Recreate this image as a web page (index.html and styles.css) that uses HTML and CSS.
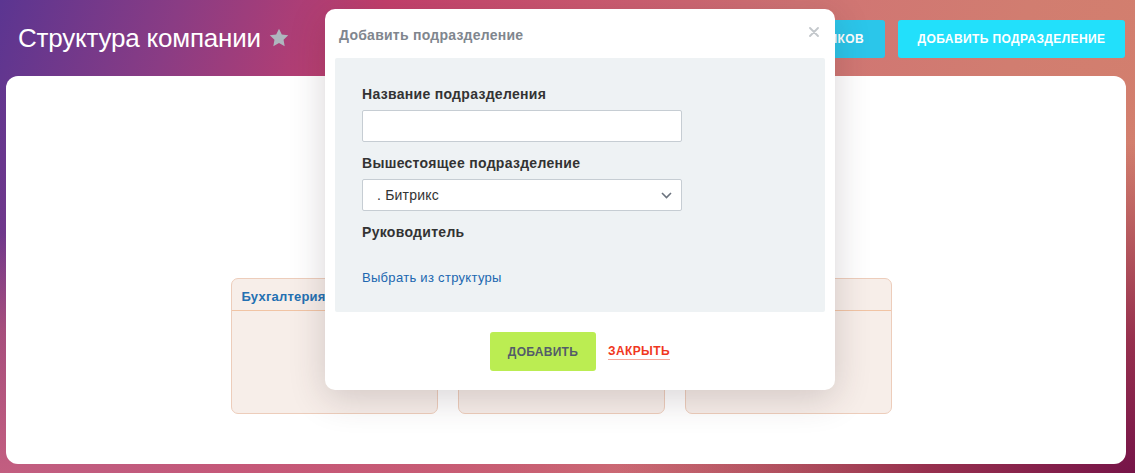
FILE: index.html
```html
<!DOCTYPE html>
<html lang="ru">
<head>
<meta charset="utf-8">
<title>Структура компании</title>
<link rel="stylesheet" href="styles.css">
</head>
<body>
<div class="page">
  <header class="top">
    <div class="title-wrap">
      <h1 class="title">Структура компании</h1>
      <svg class="star" width="20" height="19" viewBox="0 0 24 23"><path d="M12 0.8l3.4 7.1 7.8 1-5.7 5.4 1.4 7.7L12 18.3 5.1 22l1.4-7.7L0.8 8.9l7.8-1z" fill="#aeb6be"/></svg>
    </div>
    <div class="actions">
      <button class="btn btn-invite">Пригласить сотрудников</button>
      <button class="btn btn-add">Добавить подразделение</button>
    </div>
  </header>
  <main class="panel">
    <div class="cards">
      <div class="card"><div class="card-head">Бухгалтерия</div><div class="card-body"></div></div>
      <div class="card"><div class="card-head"></div><div class="card-body"></div></div>
      <div class="card"><div class="card-head"></div><div class="card-body"></div></div>
    </div>
  </main>
</div>

<div class="modal">
  <div class="modal-head">
    <span class="modal-title">Добавить подразделение</span>
    <svg class="modal-close" width="10" height="10" viewBox="0 0 10 10"><path d="M1 1L9 9M9 1L1 9" stroke="#c3c7cb" stroke-width="1.8" stroke-linecap="round"/></svg>
  </div>
  <div class="modal-body">
    <div class="field-label">Название подразделения</div>
    <div class="input"></div>
    <div class="field-label lbl-2">Вышестоящее подразделение</div>
    <div class="select">
      <span>. Битрикс</span>
      <svg width="11" height="7" viewBox="0 0 11 7"><path d="M1 1l4.5 4.5L10 1" fill="none" stroke="#6b737e" stroke-width="1.6"/></svg>
    </div>
    <div class="field-label lbl-3">Руководитель</div>
    <a class="link">Выбрать из структуры</a>
  </div>
  <div class="modal-foot">
    <button class="btn-ok">Добавить</button>
    <a class="btn-close">Закрыть</a>
  </div>
</div>
</body>
</html>
```

FILE: styles.css
```css
* { box-sizing: border-box; }
html, body { margin: 0; padding: 0; }
body {
  width: 1135px;
  height: 473px;
  overflow: hidden;
  position: relative;
  font-family: "Liberation Sans", Arial, sans-serif;
  background:
    radial-gradient(ellipse 520px 330px at 100% 100%, rgba(118, 20, 72, 1) 0%, rgba(140, 34, 72, 0.85) 40%, rgba(160, 50, 80, 0) 100%),
    radial-gradient(ellipse 850px 240px at 0% 100%, rgba(198, 96, 128, 0.95) 0%, rgba(196, 92, 116, 0.6) 60%, rgba(196, 92, 116, 0) 100%),
    linear-gradient(108deg, #5b3591 0%, #8a3c84 14%, #c43f6c 30%, #cc5870 45%, #d07474 62%, #d17d70 80%, #d4806c 100%);
}
.page { padding: 0 9px 9px 6px; }

.top {
  height: 76px;
  display: flex;
  align-items: center;
  justify-content: space-between;
}
.title-wrap { display: flex; align-items: center; padding-left: 12px; }
.title {
  margin: 0;
  font-size: 26px;
  font-weight: normal;
  color: #fff;
  letter-spacing: -0.2px;
}
.star { margin-left: 8px; margin-top: -2px; }

.actions { display: flex; gap: 13px; margin-right: 1px; margin-top: 2px; }
.btn {
  height: 38px;
  border: 0;
  border-radius: 3px;
  padding: 0 21px;
  color: #fff;
  font-family: "Liberation Sans", Arial, sans-serif;
  font-weight: bold;
  font-size: 12px;
  text-transform: uppercase;
  letter-spacing: 0.4px;
  white-space: nowrap;
}
.btn-invite { background: #2bc6ea; }
.btn-add { background: #22e0fb; width: 227px; padding: 0; }

.panel {
  height: 388px;
  background: #fff;
  border-radius: 12px;
  padding: 202px 0 0 0;
}
.cards {
  display: flex;
  justify-content: center;
  gap: 20px;
  margin-left: -10px;
}
.card {
  width: 207px;
  height: 136px;
  background: #f7eee9;
  border: 1px solid #edcdbb;
  border-radius: 7px;
}
.card-head {
  height: 32px;
  border-bottom: 1px solid #f1c4a4;
  padding: 10px 0 0 10px;
  font-size: 13px;
  font-weight: bold;
  color: #2470b2;
  letter-spacing: 0.2px;
}

.modal {
  position: absolute;
  left: 325px;
  top: 9px;
  width: 510px;
  height: 381px;
  background: #fff;
  border-radius: 10px;
  box-shadow: 0 8px 36px rgba(60, 40, 50, 0.2);
  display: flex;
  flex-direction: column;
}
.modal-head {
  height: 49px;
  display: flex;
  align-items: center;
  justify-content: space-between;
  padding: 2px 16px 0 14px;
}
.modal-title {
  font-size: 14px;
  font-weight: bold;
  color: #80868e;
  letter-spacing: 0.25px;
}
.modal-close { margin-top: -5px; }

.modal-body {
  margin: 0 10px;
  height: 254px;
  background: #eef2f4;
  border-radius: 2px;
  padding: 28px 0 0 27px;
  display: flex;
  flex-direction: column;
  align-items: flex-start;
}
.field-label {
  font-size: 14px;
  font-weight: bold;
  color: #333;
  line-height: 17px;
  letter-spacing: 0.3px;
}
.lbl-2 { margin-top: 13px; }
.lbl-3 { margin-top: 13px; }
.input, .select {
  width: 320px;
  height: 32px;
  margin-top: 7px;
  background: #fff;
  border: 1px solid #c6cdd3;
  border-radius: 2px;
}
.select {
  display: flex;
  align-items: center;
  justify-content: space-between;
  padding: 0 9px 0 14px;
  font-size: 14px;
  color: #333;
  letter-spacing: 0.2px;
}
.link {
  margin-top: 29px;
  font-size: 13px;
  color: #2067b0;
  line-height: 16px;
  letter-spacing: 0.3px;
}

.modal-foot {
  display: flex;
  justify-content: center;
  align-items: center;
  gap: 12px;
  padding-top: 20px;
}
.btn-ok {
  width: 106px;
  height: 39px;
  border: 0;
  border-radius: 3px;
  background: #bbed52;
  color: #535c69;
  font-family: "Liberation Sans", Arial, sans-serif;
  font-weight: bold;
  font-size: 12px;
  text-transform: uppercase;
  letter-spacing: 0.3px;
}
.btn-close {
  color: #f0371e;
  font-weight: bold;
  font-size: 12px;
  text-transform: uppercase;
  letter-spacing: 0.4px;
  border-bottom: 1px solid #f6a89c;
  padding-bottom: 1px;
}
```
